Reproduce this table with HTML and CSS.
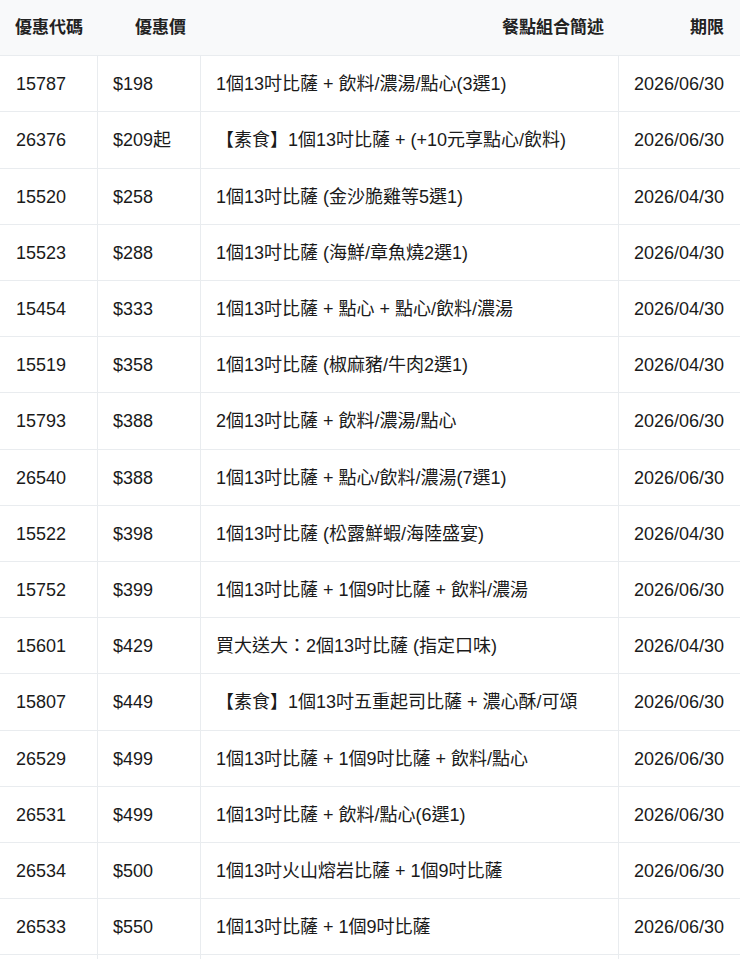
FILE: index.html
```html
<!DOCTYPE html>
<html lang="zh-Hant">
<head>
<meta charset="utf-8">
<title>優惠代碼</title>
<link rel="stylesheet" href="styles.css">
</head>
<body>
<div class="wrap">
  <div class="table">
    <div class="row head">
      <div class="cell">優惠代碼</div>
      <div class="cell">優惠價</div>
      <div class="cell">餐點組合簡述</div>
      <div class="cell last">期限</div>
    </div>
    <div class="row"><div class="cell">15787</div><div class="cell">$198</div><div class="cell">1個13吋比薩 + 飲料/濃湯/點心(3選1)</div><div class="cell">2026/06/30</div></div>
    <div class="row"><div class="cell">26376</div><div class="cell">$209起</div><div class="cell">【素食】1個13吋比薩 + (+10元享點心/飲料)</div><div class="cell">2026/06/30</div></div>
    <div class="row"><div class="cell">15520</div><div class="cell">$258</div><div class="cell">1個13吋比薩 (金沙脆雞等5選1)</div><div class="cell">2026/04/30</div></div>
    <div class="row"><div class="cell">15523</div><div class="cell">$288</div><div class="cell">1個13吋比薩 (海鮮/章魚燒2選1)</div><div class="cell">2026/04/30</div></div>
    <div class="row"><div class="cell">15454</div><div class="cell">$333</div><div class="cell">1個13吋比薩 + 點心 + 點心/飲料/濃湯</div><div class="cell">2026/04/30</div></div>
    <div class="row"><div class="cell">15519</div><div class="cell">$358</div><div class="cell">1個13吋比薩 (椒麻豬/牛肉2選1)</div><div class="cell">2026/04/30</div></div>
    <div class="row"><div class="cell">15793</div><div class="cell">$388</div><div class="cell">2個13吋比薩 + 飲料/濃湯/點心</div><div class="cell">2026/06/30</div></div>
    <div class="row"><div class="cell">26540</div><div class="cell">$388</div><div class="cell">1個13吋比薩 + 點心/飲料/濃湯(7選1)</div><div class="cell">2026/06/30</div></div>
    <div class="row"><div class="cell">15522</div><div class="cell">$398</div><div class="cell">1個13吋比薩 (松露鮮蝦/海陸盛宴)</div><div class="cell">2026/04/30</div></div>
    <div class="row"><div class="cell">15752</div><div class="cell">$399</div><div class="cell">1個13吋比薩 + 1個9吋比薩 + 飲料/濃湯</div><div class="cell">2026/06/30</div></div>
    <div class="row"><div class="cell">15601</div><div class="cell">$429</div><div class="cell">買大送大：2個13吋比薩 (指定口味)</div><div class="cell">2026/04/30</div></div>
    <div class="row"><div class="cell">15807</div><div class="cell">$449</div><div class="cell">【素食】1個13吋五重起司比薩 + 濃心酥/可頌</div><div class="cell">2026/06/30</div></div>
    <div class="row"><div class="cell">26529</div><div class="cell">$499</div><div class="cell">1個13吋比薩 + 1個9吋比薩 + 飲料/點心</div><div class="cell">2026/06/30</div></div>
    <div class="row"><div class="cell">26531</div><div class="cell">$499</div><div class="cell">1個13吋比薩 + 飲料/點心(6選1)</div><div class="cell">2026/06/30</div></div>
    <div class="row"><div class="cell">26534</div><div class="cell">$500</div><div class="cell">1個13吋火山熔岩比薩 + 1個9吋比薩</div><div class="cell">2026/06/30</div></div>
    <div class="row"><div class="cell">26533</div><div class="cell">$550</div><div class="cell">1個13吋比薩 + 1個9吋比薩</div><div class="cell">2026/06/30</div></div>
    <div class="row"><div class="cell">&nbsp;</div><div class="cell">&nbsp;</div><div class="cell">&nbsp;</div><div class="cell">&nbsp;</div></div>
  </div>
</div>
</body>
</html>
```
FILE: styles.css
```css
html, body {
  margin: 0;
  padding: 0;
  background: #ffffff;
}

body {
  font-family: "Liberation Sans", "Noto Sans CJK TC", sans-serif;
  color: #1a1a1a;
}

.wrap {
  height: 100vh;
  overflow: hidden;
}

.table {
  width: 740px;
}

.row {
  display: grid;
  grid-template-columns: 97px 103px 418px 122px;
  border-bottom: 1px solid #e9ecef;
}

.cell {
  padding: 15px 14px 13px 15px;
  font-size: 18px;
  line-height: 27.2px;
  white-space: nowrap;
  border-left: 1px solid #e9ecef;
}

.cell:first-child {
  border-left: none;
  padding-left: 16px;
}

.head {
  background: #f8f9fa;
}

.head .cell {
  padding: 14px 14px;
  border-left: 1px solid transparent;
  text-align: right;
  font-weight: bold;
  font-size: 17px;
  color: #222222;
}

.head .cell:first-child {
  border-left: none;
}

.head .cell.last {
  padding-right: 16px;
}
```
